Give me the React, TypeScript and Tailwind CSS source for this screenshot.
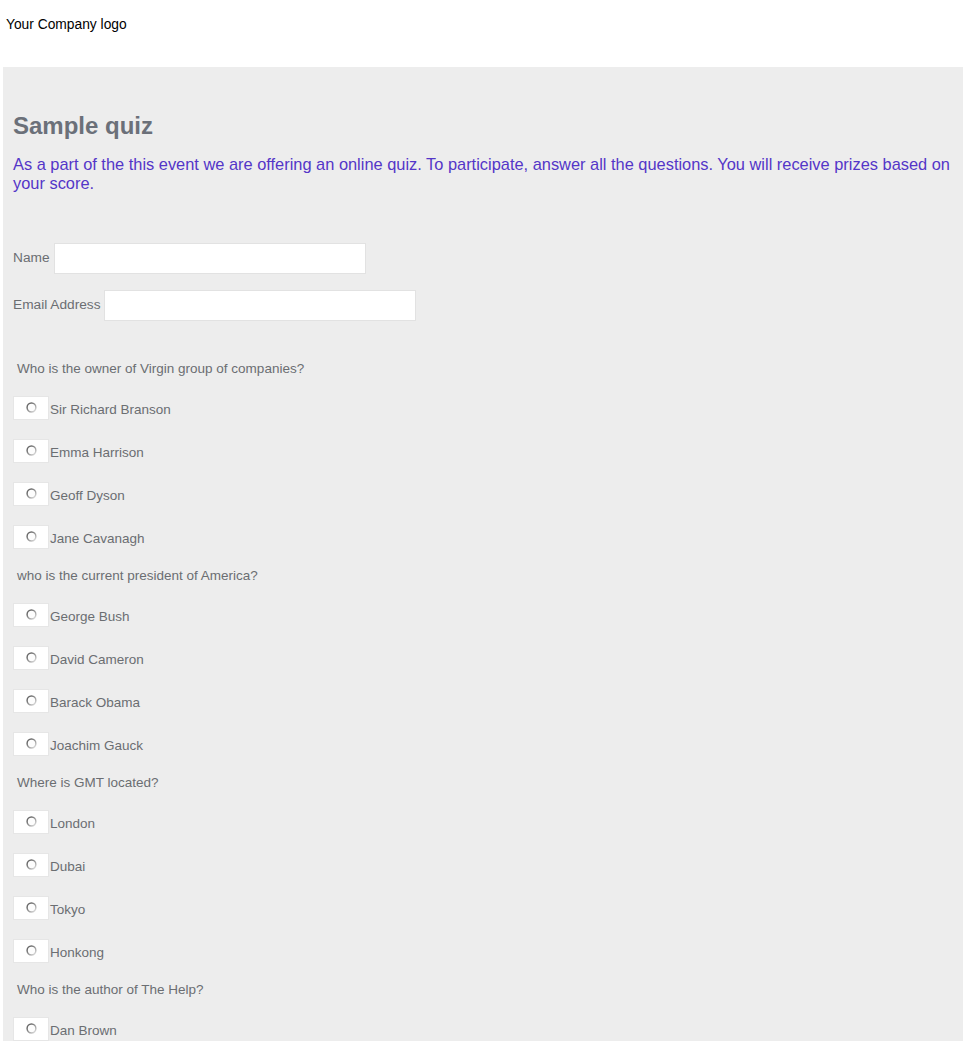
import { useState } from 'react'

const questions = [
  {
    id: 'q1',
    text: 'Who is the owner of Virgin group of companies?',
    options: ['Sir Richard Branson', 'Emma Harrison', 'Geoff Dyson', 'Jane Cavanagh'],
  },
  {
    id: 'q2',
    text: 'who is the current president of America?',
    options: ['George Bush', 'David Cameron', 'Barack Obama', 'Joachim Gauck'],
  },
  {
    id: 'q3',
    text: 'Where is GMT located?',
    options: ['London', 'Dubai', 'Tokyo', 'Honkong'],
  },
  {
    id: 'q4',
    text: 'Who is the author of The Help?',
    options: ['Dan Brown', 'Kathryn Stockett', 'J. K. Rowling', 'Stephen King'],
  },
]

function RadioGlyph({ checked }: { checked: boolean }) {
  return (
    <svg width="11" height="11" viewBox="0 0 11 11" className="shrink-0">
      <defs>
        <linearGradient id="ring" x1="0" y1="0" x2="1" y2="1">
          <stop offset="0" stopColor="#555" />
          <stop offset="0.5" stopColor="#8f8f8f" />
          <stop offset="1" stopColor="#e8e8e8" />
        </linearGradient>
      </defs>
      <circle cx="5.5" cy="5.5" r="4.4" fill="#fdfdfd" stroke="url(#ring)" strokeWidth="1.5" />
      {checked && <circle cx="5.5" cy="5.5" r="2" fill="#4a4a4a" />}
    </svg>
  )
}

export default function App() {
  const [answers, setAnswers] = useState<Record<string, number>>({})

  return (
    <div className="min-h-screen bg-white font-['Liberation_Sans',Arial,sans-serif]">
      <div className="h-[67px] pl-[6px] pt-[17px] text-[13.8px] leading-[16px] text-black">
        Your Company logo
      </div>

      <div className="ml-[3px] w-[960px] bg-[#ededed] px-[10px] pt-[45px] pb-[40px]">
        <h1 className="text-[24px] font-bold leading-[28px] text-[#6b7079]">Sample quiz</h1>
        <p className="mt-[15px] text-[16.4px] leading-[19px] text-[#5436c8]">
          As a part of the this event we are offering an online quiz. To participate, answer all the questions. You will
          receive prizes based on your score.
        </p>

        <div className="mt-[50px] flex flex-col gap-[16px] text-[13.7px] text-[#6b6e72]">
          <label className="flex items-center gap-[4px]">
            <span>Name</span>
            <input type="text" className="h-[31px] w-[312px] border border-[#e2e2e2] bg-white px-2 outline-none" />
          </label>
          <label className="flex items-center gap-[4px]">
            <span>Email Address</span>
            <input type="text" className="h-[31px] w-[312px] border border-[#e2e2e2] bg-white px-2 outline-none" />
          </label>
        </div>

        <div className="mt-[39px] flex flex-col gap-[18px] text-[13.5px] text-[#6b6e72]">
          {questions.map((q) => (
            <div key={q.id}>
              <p className="pl-[4px] leading-[17px]">{q.text}</p>
              <div className="mt-[19px] flex flex-col gap-[19px]">
                {q.options.map((opt, i) => (
                  <button
                    key={opt}
                    type="button"
                    onClick={() => setAnswers({ ...answers, [q.id]: i })}
                    className="flex h-[24px] items-center text-left"
                  >
                    <span className="flex h-[24px] w-[36px] items-start border border-[#e6e6e6] bg-white pl-[12px] pt-[5px]">
                      <RadioGlyph checked={answers[q.id] === i} />
                    </span>
                    <span className="pl-[1px] pt-[2px] leading-[17px]">{opt}</span>
                  </button>
                ))}
              </div>
            </div>
          ))}
        </div>
      </div>
    </div>
  )
}
